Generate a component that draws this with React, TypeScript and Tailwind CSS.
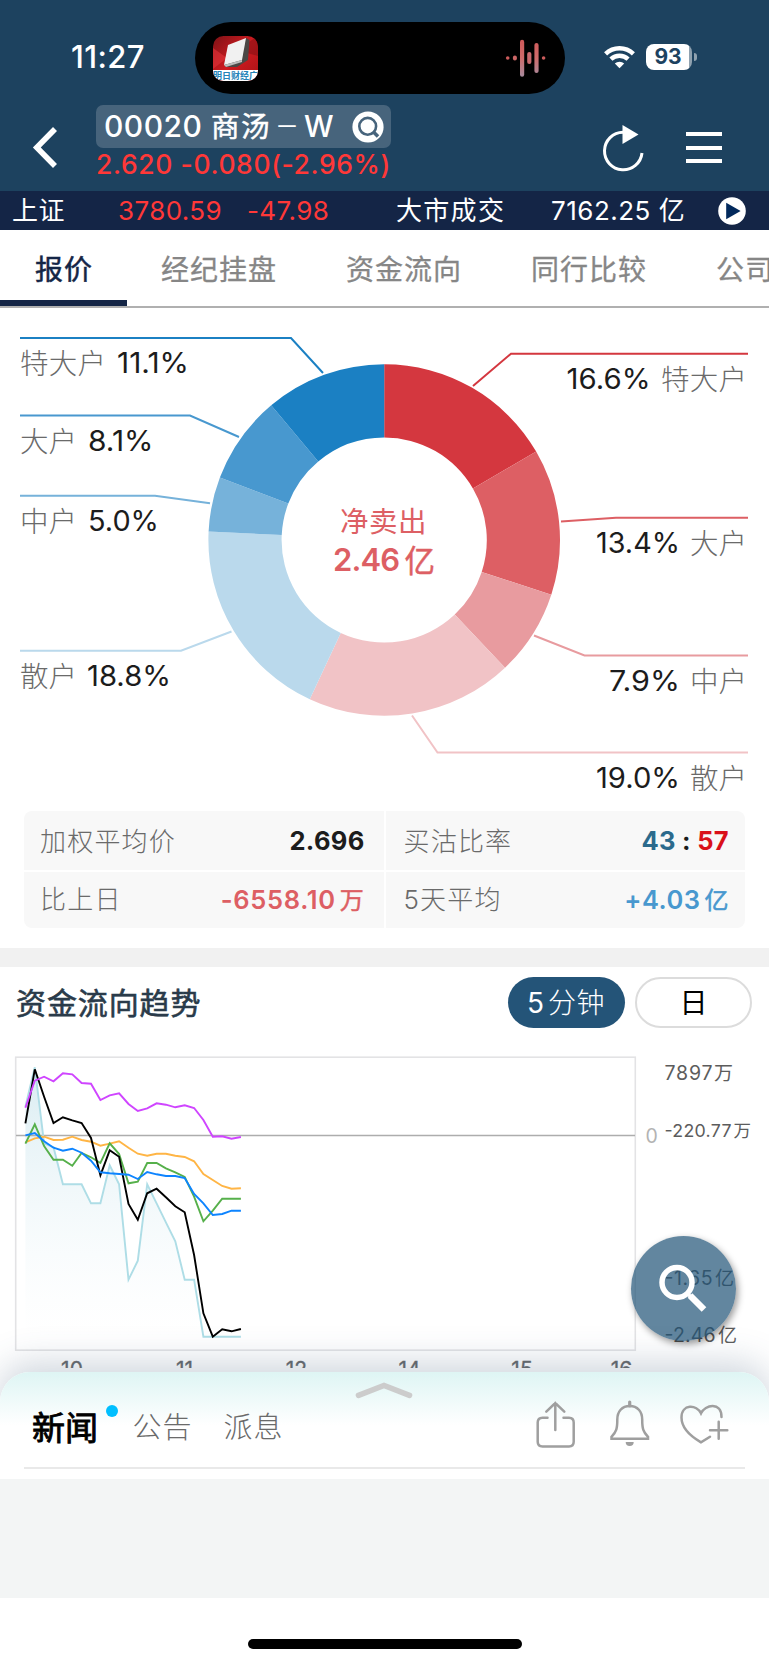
const FONT = "font-['Inter','Noto_Sans_CJK_SC',sans-serif]";

const TABS = ["报价", "经纪挂盘", "资金流向", "同行比较", "公司"];

const CX = 384.2;
const CY = 232;
const R_OUT = 175.8;
const R_IN = 102.6;

const SLICES = [
  { value: 16.6, color: "#d4373f" },
  { value: 13.4, color: "#dd5f64" },
  { value: 7.9, color: "#e89b9f" },
  { value: 19.0, color: "#f1c3c6" },
  { value: 18.8, color: "#bad9ec" },
  { value: 5.0, color: "#76b2da" },
  { value: 8.1, color: "#4898cf" },
  { value: 11.1, color: "#1b80c3" },
];

// y is the baseline of the label text
const LEFT_LABELS = [
  { name: "特大户", nameW: 86, pct: "11.1%", x: 117, w: 72, y: 65, color: "#1b80c3", line: "20,30 291,30 323,65" },
  { name: "大户", nameW: 57, pct: "8.1%", x: 88, w: 65.5, y: 143, color: "#4898cf", line: "20,107.5 190,107.5 239,129" },
  { name: "中户", nameW: 57, pct: "5.0%", x: 88, w: 71, y: 223, color: "#76b2da", line: "20,187.7 155,187.7 210,195.3" },
  { name: "散户", nameW: 57, pct: "18.8%", x: 87, w: 84, y: 378, color: "#bad9ec", line: "20,342.7 181,342.7 231.5,323.5" },
];

const RIGHT_LABELS = [
  { name: "特大户", nameX: 661, nameW: 86, pct: "16.6%", x: 566.5, w: 84, y: 81, color: "#d4373f", line: "748,45.7 511,45.7 473,78" },
  { name: "大户", nameX: 690, nameW: 57, pct: "13.4%", x: 596, w: 84, y: 245, color: "#dd5f64", line: "748,209.7 616,209.7 561,213.5" },
  { name: "中户", nameX: 690, nameW: 57, pct: "7.9%", x: 609, w: 71, y: 383, color: "#e89b9f", line: "748,347.5 584.5,347.5 534,327.5" },
  { name: "散户", nameX: 690, nameW: 57, pct: "19.0%", x: 596, w: 84, y: 480, color: "#f1c3c6", line: "748,444.5 437.5,444.5 412,407.5" },
];

function polar(r: number, pct: number) {
  const a = (pct / 100) * Math.PI * 2;
  return `${(CX + r * Math.sin(a)).toFixed(2)} ${(CY - r * Math.cos(a)).toFixed(2)}`;
}

const TOTAL = SLICES.reduce((s, x) => s + x.value, 0);

function slicePath(start: number, end: number) {
  return `M${polar(R_OUT, start)}A${R_OUT} ${R_OUT} 0 0 1 ${polar(R_OUT, end)}L${polar(R_IN, end)}A${R_IN} ${R_IN} 0 0 0 ${polar(R_IN, start)}Z`;
}

function Donut() {
  let acc = 0;
  return (
    <svg width="769" height="503" viewBox="0 0 769 503" className="block">
      {SLICES.map((s, i) => {
        const from = (acc / TOTAL) * 100;
        acc += s.value;
        return <path key={i} d={slicePath(from, (acc / TOTAL) * 100)} fill={s.color} />;
      })}
      {LEFT_LABELS.map((l) => (
        <g key={l.pct}>
          <polyline points={l.line} fill="none" stroke={l.color} strokeWidth="2" />
          <text x="20" y={l.y + 0.5} textLength={l.nameW} fontSize="28.5" fontWeight="300" fill="#6a6a6a">{l.name}</text>
          <text x={l.x} y={l.y} textLength={l.w} lengthAdjust="spacingAndGlyphs" fontSize="28.5" fill="#1c1c1c">{l.pct}</text>
        </g>
      ))}
      {RIGHT_LABELS.map((l) => (
        <g key={l.pct}>
          <polyline points={l.line} fill="none" stroke={l.color} strokeWidth="2" />
          <text x={l.x} y={l.y} textLength={l.w} lengthAdjust="spacingAndGlyphs" fontSize="28.5" fill="#1c1c1c">{l.pct}</text>
          <text x={l.nameX} y={l.y + 0.5} textLength={l.nameW} fontSize="28.5" fontWeight="300" fill="#6a6a6a">{l.name}</text>
        </g>
      ))}
      <text x="340" y="223.5" textLength="86.5" fontSize="28.5" fill="#dd5f64">净卖出</text>
      <text x="333" y="263" textLength="67" fontSize="31" fontWeight="600" fill="#dd5f64">2.46</text>
      <text x="404.5" y="263.5" fontSize="30.5" fill="#dd5f64" stroke="#dd5f64" strokeWidth="0.5">亿</text>
    </svg>
  );
}

// Series values are thirds of a pixel below the top of the chart
const SERIES = [
  { color: "#aedde6", pts: [200, 82, 310, 322, 433, 433, 433, 490, 490, 376, 433, 719, 662, 433, 490, 547, 604, 719, 719, 890, 890, 890, 890, 890] },
  { color: "#ffb545", pts: [307, 295, 290, 300, 299, 290, 300, 305, 317, 311, 304, 323, 341, 347, 341, 341, 347, 351, 364, 402, 420, 438, 446, 445] },
  { color: "#56b04b", pts: [311, 253, 318, 359, 359, 377, 339, 352, 369, 310, 342, 430, 425, 369, 369, 385, 397, 411, 470, 544, 512, 476, 476, 476] },
  { color: "#000000", pts: [250, 88, 170, 249, 232, 241, 249, 294, 406, 331, 350, 492, 539, 460, 446, 472, 499, 517, 645, 820, 890, 868, 874, 867] },
  { color: "#0d84ff", pts: [286, 279, 304, 323, 332, 326, 338, 362, 397, 400, 402, 404, 417, 396, 403, 408, 408, 414, 462, 490, 525, 522, 512, 512] },
  { color: "#cf45ff", pts: [203, 122, 110, 124, 100, 103, 129, 131, 180, 166, 160, 192, 213, 205, 190, 194, 202, 196, 204, 240, 290, 289, 296, 291] },
];

const HOURS = [
  { x: 72, t: "10" },
  { x: 184.5, t: "11" },
  { x: 296.5, t: "12" },
  { x: 409.5, t: "14" },
  { x: 522, t: "15" },
  { x: 621.5, t: "16" },
];

function toPoints(pts: number[]) {
  return pts.map((p, i) => `${(25.4 + i * 9.37).toFixed(1)},${(p / 3).toFixed(1)}`).join(" ");
}

function TrendChart() {
  return (
    <svg width="769" height="328" viewBox="0 0 769 328" className="block overflow-hidden">
      <defs>
        <linearGradient id="area" x1="0" y1="0" x2="0" y2="1">
          <stop offset="0" stopColor="#d9ecf2" />
          <stop offset="1" stopColor="#ffffff" stopOpacity="0.3" />
        </linearGradient>
      </defs>
      <polygon points={`25.4,297 ${toPoints(SERIES[0].pts)} 241,297`} fill="url(#area)" />
      <rect x="15.7" y="17.2" width="619.6" height="293" fill="none" stroke="#e3e3e5" strokeWidth="1.6" />
      <line x1="16" x2="635" y1="95.5" y2="95.5" stroke="#adadad" strokeWidth="1.6" />
      {SERIES.map((s) => (
        <polyline key={s.color} points={toPoints(s.pts)} fill="none" stroke={s.color} strokeWidth="1.9" />
      ))}
      <text x="645.5" y="102.5" fontSize="19.5" fill="#b3b3b3">0</text>
      <g fill="#5c5c5c">
        <text x="664.5" y="40" fontSize="19.5" textLength="48">7897</text>
        <text x="714" y="40" fontSize="19">万</text>
        <text x="664.5" y="97" fontSize="17.8" textLength="67">-220.77</text>
        <text x="733.5" y="97" fontSize="17.5">万</text>
        <text x="664.5" y="244.5" fontSize="19.5" textLength="48">-1.65</text>
        <text x="715" y="244.5" fontSize="19">亿</text>
        <text x="664.5" y="302" fontSize="19.5" textLength="51">-2.46</text>
        <text x="718" y="302" fontSize="19">亿</text>
      </g>
      <g fill="#66696c" fontSize="21" textAnchor="middle">
        {HOURS.map((h) => (
          <text key={h.t} x={h.x} y="337" stroke="#66696c" strokeWidth="0.3">{h.t}</text>
        ))}
      </g>
    </svg>
  );
}

function AppIcon() {
  return (
    <svg width="45" height="45" viewBox="0 0 45 45">
      <defs>
        <linearGradient id="red" x1="0" y1="0" x2="1" y2="1">
          <stop offset="0" stopColor="#7e1216" />
          <stop offset="0.5" stopColor="#cf1b20" />
          <stop offset="1" stopColor="#a81216" />
        </linearGradient>
        <clipPath id="round">
          <rect width="45" height="45" rx="10.5" />
        </clipPath>
      </defs>
      <g clipPath="url(#round)">
        <rect width="45" height="45" fill="url(#red)" />
        <path d="M0 12L14 22L0 33Z" fill="#e2343a" opacity="0.6" />
        <path d="M24 14L45 0V20Z" fill="#7a0e12" opacity="0.5" />
        <path d="M33 2L36.5 4L35 24L24 31L13 31L11 28Z" fill="#4b4745" />
        <path d="M15 9L33 2L29 24L11 29Z" fill="#f1f1f1" />
        <path d="M11 29L29 24V26L13 31Z" fill="#bdbdbd" />
        <rect y="34" width="45" height="11" fill="#fff" />
        <text x="0" y="42.5" fontSize="9" fontWeight="700" fill="#2483b8" textLength="45">明日财经广</text>
      </g>
    </svg>
  );
}

function StatusBar() {
  return (
    <div className="flex h-[94px] pt-[22px]">
      <div className="w-[195px] pl-[71px] text-[31px] leading-[70px] font-medium tracking-[0.4px] text-white">11:27</div>
      <div className="flex h-[72px] w-[370px] items-center justify-between rounded-full bg-black pr-[18px] pl-[18px]">
        <AppIcon />
        <svg width="42" height="40" viewBox="0 0 42 40">
          <defs>
            <linearGradient id="wave" gradientUnits="userSpaceOnUse" x1="0" y1="2" x2="0" y2="38">
              <stop offset="0" stopColor="#cf5a5a" />
              <stop offset="0.5" stopColor="#cf6b6b" />
              <stop offset="1" stopColor="#a88a9c" />
            </linearGradient>
          </defs>
          <circle cx="2.7" cy="20" r="1.8" fill="#cc5c5c" />
          <rect x="7.9" y="17.5" width="4" height="5" rx="2" fill="#cc6666" />
          <rect x="15" y="1.8" width="4.2" height="37" rx="2.1" fill="url(#wave)" />
          <rect x="22.2" y="14" width="4.2" height="12" rx="2.1" fill="#c96a6e" />
          <rect x="29.4" y="5" width="4.2" height="30" rx="2.1" fill="url(#wave)" />
          <circle cx="38.6" cy="20" r="1.8" fill="#cc5c5c" />
        </svg>
      </div>
      <div className="flex h-[70px] items-center gap-[11px] pl-[39px]">
        <svg width="31" height="24" viewBox="0 0 31 24" fill="none" stroke="#fff" strokeWidth="4.4">
          <path d="M1.6 8.8A20 20 0 0 1 29.4 8.8" />
          <path d="M6.9 14.2A12.4 12.4 0 0 1 24.1 14.2" />
          <path d="M15.5 23.3L10.8 18.6A6.8 6.8 0 0 1 20.2 18.6Z" fill="#fff" stroke="none" />
        </svg>
        <div className="flex items-center gap-[1.5px]">
          <div className="h-[26px] w-[46px] rounded-[8px] bg-linear-to-r from-white from-93% to-[#8fa1af] to-93% pr-[2px] text-center text-[21px] leading-[26px] font-bold text-[#1d425f]">93</div>
          <div className="h-[8px] w-[3px] rounded-r-full bg-[#8fa1af]" />
        </div>
      </div>
    </div>
  );
}

function NavBar() {
  return (
    <div className="flex h-[97px] pt-[11px]">
      <svg width="96" height="80" viewBox="0 0 96 80" fill="none" stroke="#fff" strokeWidth="5.6">
        <path d="M55 24L36.8 42.5L55 61" />
      </svg>
      <div className="w-[295px]">
        <div className="flex h-[43px] items-center rounded-[7px] bg-[#47647c] pl-[8px] text-[30px] leading-[43px] text-white">
          <span className="w-[107px] font-medium tracking-[0.5px]">00020</span>
          <span className="w-[64px] text-[28.5px] tracking-[1.5px] [-webkit-text-stroke:0.5px]">商汤</span>
          <span className="w-[29px] text-[24px]">－</span>
          <span className="text-[29.5px] font-medium">W</span>
          <svg width="32" height="32" viewBox="0 0 32 32" className="mr-[7px] ml-auto" fill="none">
            <circle cx="16" cy="16" r="15.6" fill="#fff" />
            <circle cx="15.7" cy="15.3" r="8.4" stroke="#47647c" strokeWidth="2.6" />
            <path d="M21 20.5L26 25.5" stroke="#47647c" strokeWidth="3.6" />
          </svg>
        </div>
        <div className="text-[26.5px] leading-[32px] font-medium tracking-[0.62px] whitespace-nowrap text-[#ff3838]">2.620 -0.080(-2.96%)</div>
      </div>
      <svg width="44" height="52" viewBox="0 0 44 52" className="mt-[16px] ml-[210px]" fill="none">
        <path d="M41 32A18.8 18.8 0 1 1 22 11.2" stroke="#fff" strokeWidth="3" />
        <path d="M21.5 4L37.5 13.5L21.5 23Z" fill="#fff" />
      </svg>
      <div className="mt-[27px] ml-[41px] flex w-[36px] flex-col gap-[9.6px]">
        <div className="h-[4px] bg-white" />
        <div className="h-[4px] bg-white" />
        <div className="h-[4px] bg-white" />
      </div>
    </div>
  );
}

function Ticker() {
  return (
    <div className="flex h-[39px] items-center bg-[#142546] pl-[12px] text-[26px] leading-[39px] whitespace-nowrap text-white">
      <span className="w-[106px] tracking-[0.5px]">上证</span>
      <span className="w-[129px] tracking-[0.4px] text-[#ff3838]">3780.59</span>
      <span className="w-[149px] tracking-[0.4px] text-[#ff3838]">-47.98</span>
      <span className="w-[155px] tracking-[1.3px]">大市成交</span>
      <span className="w-[167px] tracking-[0.5px]">7162.25 亿</span>
      <svg width="28" height="28" viewBox="0 0 28 28">
        <circle cx="14" cy="14" r="13.8" fill="#fff" />
        <path d="M8.2 5.8L22.6 14L8.2 22.2Z" fill="#02295c" />
      </svg>
    </div>
  );
}

function Tabs() {
  return (
    <div className="flex h-[78px] overflow-hidden border-b-2 border-[#b0b0b0] text-[28px] leading-[80px] tracking-[1px] text-[#868686]">
      {TABS.map((t, i) => (
        <div
          key={t}
          className={
            i === 0
              ? "h-[76px] w-[127px] shrink-0 border-b-[6px] border-[#142546] pl-[35px] text-[#142546] [-webkit-text-stroke:0.5px]"
              : "h-[76px] w-[185px] shrink-0 pl-[34px] [-webkit-text-stroke:0.3px]"
          }
        >
          {t}
        </div>
      ))}
    </div>
  );
}

function Stats() {
  return (
    <div className="mx-[24px] mb-5 grid h-[117px] grid-cols-2 gap-[2px] overflow-hidden rounded-[8px] text-[26px] text-[#6a6a6a]">
      <div className="flex items-center justify-between bg-[#f8f8f8] pt-[2px] pr-[19px] pl-[16px]">
        <span className="font-light tracking-[1.2px]">加权平均价</span>
        <span className="text-[25.5px] font-bold tracking-[0.3px] text-[#1c1c1c]">2.696</span>
      </div>
      <div className="flex items-center justify-between bg-[#f8f8f8] pt-[2px] pr-[16px] pl-[18px]">
        <span className="font-light tracking-[1.2px]">买沽比率</span>
        <span className="text-[25.5px] font-bold tracking-[0.3px]">
          <span className="text-[#2b6a8c]">43</span>
          <span className="text-[#1c1c1c]"> : </span>
          <span className="text-[#d9101a]">57</span>
        </span>
      </div>
      <div className="flex items-center justify-between bg-[#f8f8f8] pr-[19px] pl-[16px]">
        <span className="font-light tracking-[1.2px]">比上日</span>
        <span className="text-[25.5px] font-semibold tracking-[0.7px] text-[#dd5f64]">
          -6558.10<span className="ml-[4px] text-[24px] font-normal [-webkit-text-stroke:0.5px]">万</span>
        </span>
      </div>
      <div className="flex items-center justify-between bg-[#f8f8f8] pr-[16px] pl-[18px]">
        <span className="font-light tracking-[1.2px]">5天平均</span>
        <span className="text-[25.5px] font-semibold tracking-[0.5px] text-[#4898cf]">
          +4.03<span className="ml-[4px] text-[24px] font-normal [-webkit-text-stroke:0.5px]">亿</span>
        </span>
      </div>
    </div>
  );
}

function Trend() {
  return (
    <section className="relative">
      <div className="flex h-[73px] items-start pt-[10px] pr-[17px] pl-[16px]">
        <h2 className="text-[30px] leading-[52px] tracking-[0.9px] text-[#2a3b4a] [-webkit-text-stroke:0.6px]">资金流向趋势</h2>
        <div className="ml-auto flex gap-[10px] text-[28px]">
          <button className="h-[51px] w-[117px] rounded-full bg-[#245478] pr-[1px] leading-[52px] text-white">
            5<span className="ml-[4px] font-light tracking-[0.6px]">分钟</span>
          </button>
          <button className="h-[51px] w-[117px] rounded-full border-2 border-[#dcdcdc] leading-[49px] text-black">日</button>
        </div>
      </div>
      <TrendChart />
      <button className="absolute top-[269px] left-[631px] h-[105px] w-[105px] rounded-full bg-[rgba(31,82,118,0.7)] shadow-[2px_3px_7px_rgba(0,0,0,0.4)]">
        <svg width="105" height="105" viewBox="0 0 105 105" fill="none" stroke="#fff">
          <circle cx="46" cy="46.5" r="15" strokeWidth="5.5" />
          <path d="M59 59.5L73 73.5" strokeWidth="6.5" />
          <path d="M56 57L60 61" strokeWidth="3.5" />
        </svg>
      </button>
    </section>
  );
}

function NewsSheet() {
  return (
    <div className="relative mt-[4px] h-[107px] rounded-t-[30px] bg-linear-to-b from-[#def5f4] to-white to-50% pt-[20px] shadow-[0_-8px_36px_rgba(60,90,120,0.26)]">
      <svg width="60" height="28" viewBox="0 0 60 28" className="absolute top-0 left-[354px]" fill="none" stroke="#cccccc" strokeWidth="5.6" strokeLinecap="round">
        <path d="M4.5 23.3L30 13.5L55.5 23.3" />
      </svg>
      <div className="mx-[24px] flex h-[77px] items-start border-b-2 border-[#e9e9e9] pt-[8px] text-[29px] leading-[56px] text-[#6a6a6a]">
        <span className="w-[68px] pl-[8px] text-[33px] whitespace-nowrap text-black [-webkit-text-stroke:0.9px]">新闻</span>
        <span className="mt-[5px] ml-[13.5px] size-[12px] rounded-full bg-[#00bfff]" />
        <span className="ml-[15px] w-[91px] font-light tracking-[1px]">公告</span>
        <span className="font-light tracking-[1px]">派息</span>
        <div className="ml-auto flex gap-[26px] pr-[16px]">
          <svg width="48" height="48" viewBox="0 0 48 48" fill="none" stroke="#9f9f9f" strokeWidth="2.5" strokeLinecap="round">
            <path d="M14.3 11.7L23.3 3L32.3 11.7M23.3 3V30" />
            <path d="M15.5 17.7H10.5Q5.7 17.7 5.7 22.5V41.8Q5.7 46.5 10.5 46.5H37Q41.7 46.5 41.7 41.8V22.5Q41.7 17.7 37 17.7H31.5" />
          </svg>
          <svg width="48" height="48" viewBox="0 0 48 48" fill="none" stroke="#9f9f9f" strokeWidth="2.5">
            <path d="M23.7 2V6" strokeWidth="3.2" strokeLinecap="round" />
            <path d="M23.7 6C16 6 11.3 11.5 11.3 19.5C11.3 28.5 10.5 31.5 5.5 36.8V38.7H42V36.8C37 31.5 36.2 28.5 36.2 19.5C36.2 11.5 31.5 6 23.7 6Z" />
            <path d="M19.7 42H27.7A4 4 0 0 1 19.7 42Z" fill="#9f9f9f" stroke="none" />
          </svg>
          <svg width="49" height="48" viewBox="0 0 49 48" fill="none" stroke="#9f9f9f" strokeWidth="2.5" strokeLinecap="round">
            <path d="M41.5 17C41.5 1.5 25 4.5 21 13.3C17 4.5 1.5 3.5 1.5 17.5C1.5 28 11 36.5 21 42.3L30 36.7" />
            <path d="M30 30.3H47.3M38.7 21.8V38.8" />
          </svg>
        </div>
      </div>
    </div>
  );
}

export default function App() {
  return (
    <div className={`h-[1665px] w-[769px] overflow-hidden bg-white ${FONT}`}>
      <header className="bg-[#1d425f]">
        <StatusBar />
        <NavBar />
      </header>
      <Ticker />
      <Tabs />
      <Donut />
      <Stats />
      <div className="h-[19px] bg-[#f1f1f1]" />
      <Trend />
      <NewsSheet />
      {/* stays above the sheet's shadow */}
      <div className="relative h-[119px] bg-[#f3f5f5]" />
      <div className="pt-[41px]">
        <div className="mx-auto h-[10px] w-[274px] rounded-full bg-black" />
      </div>
    </div>
  );
}
